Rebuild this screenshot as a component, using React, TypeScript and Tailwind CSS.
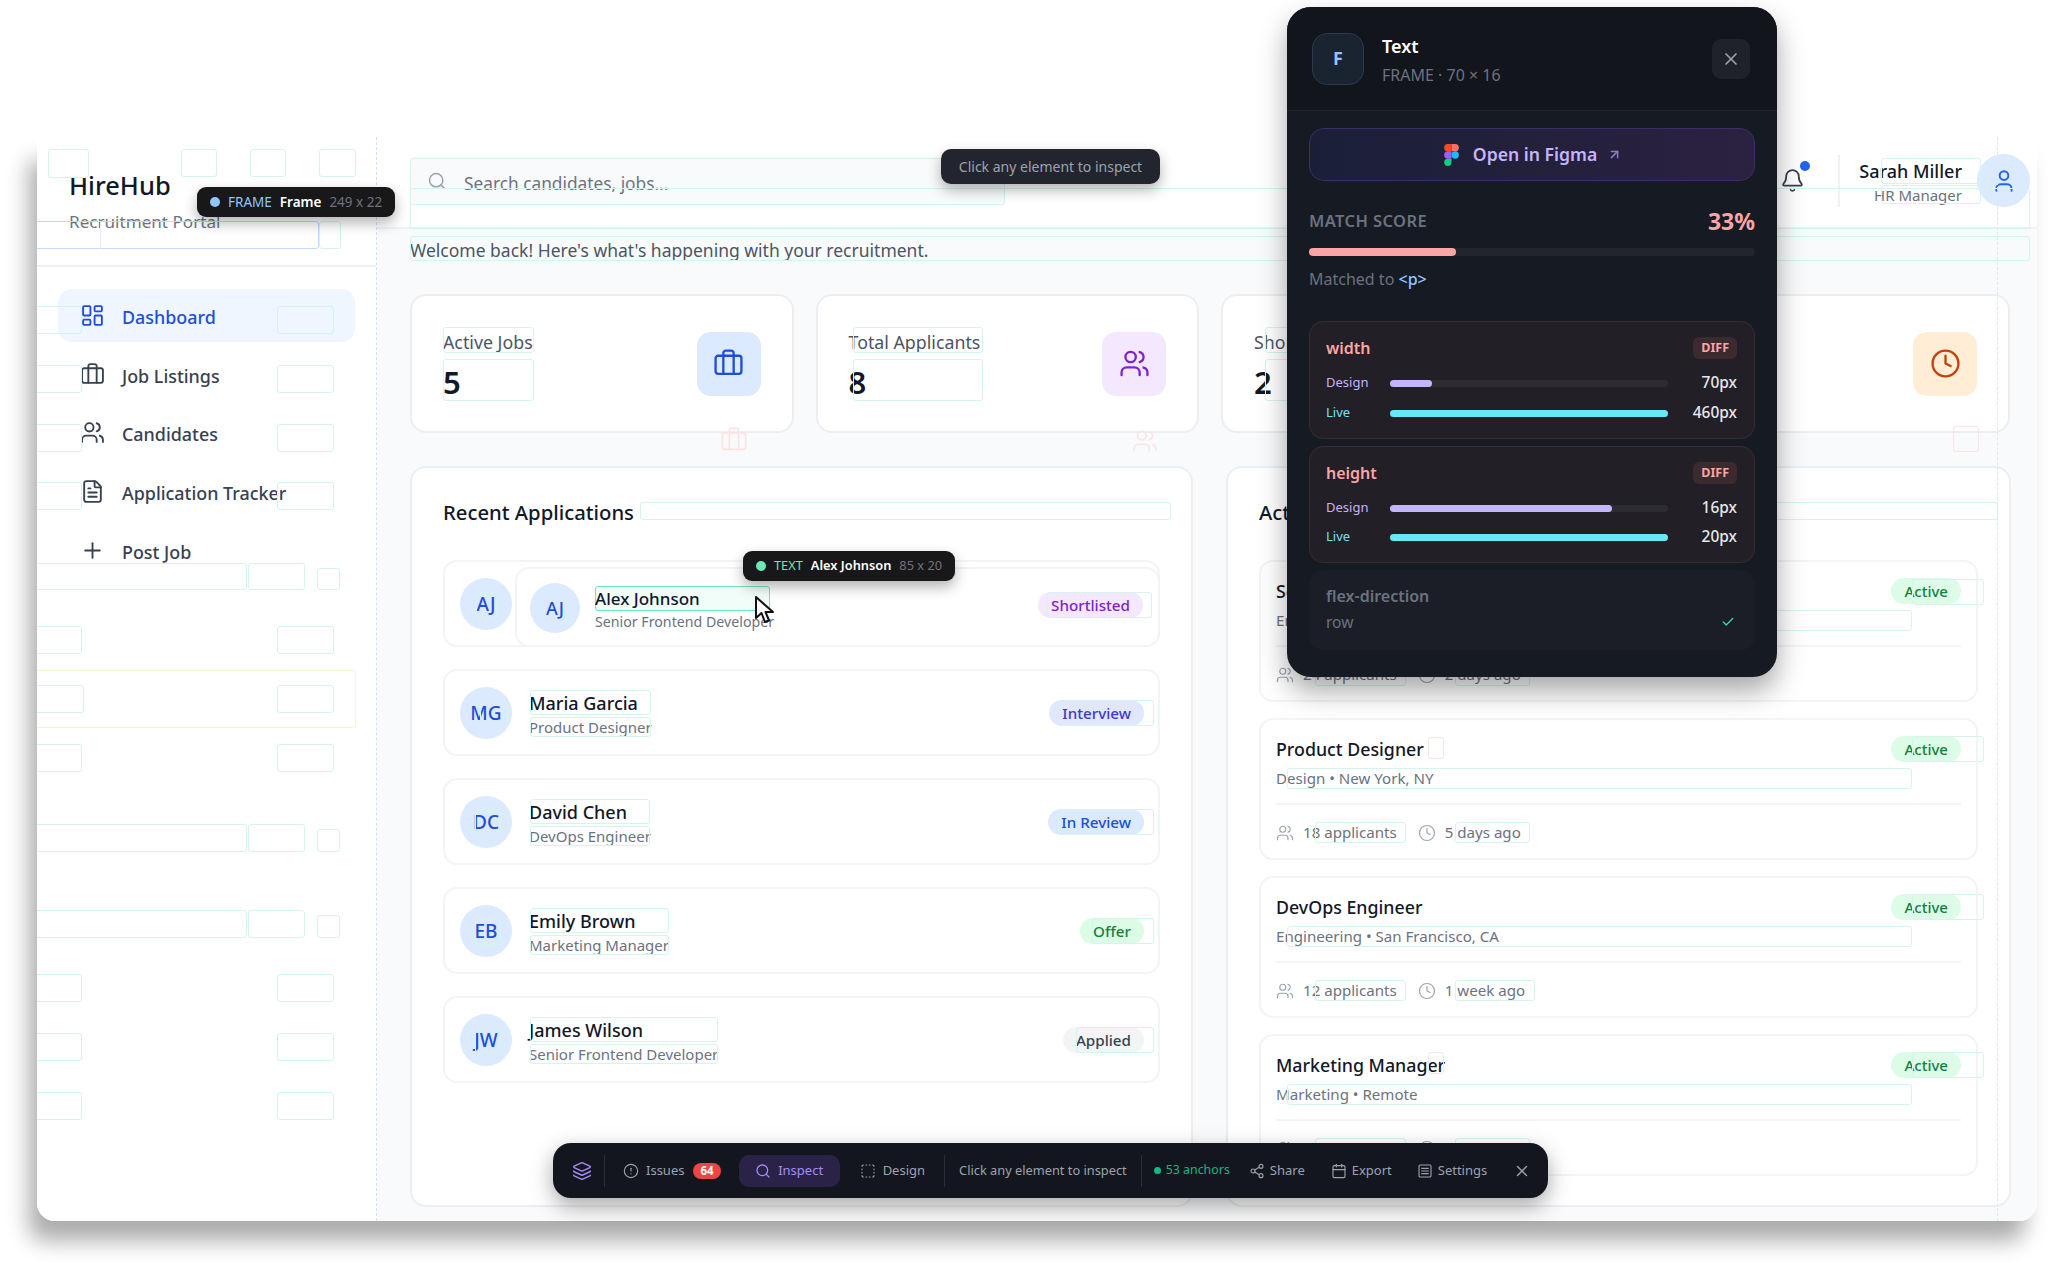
import {
  ArrowUpRight,
  Bell,
  Briefcase,
  Calendar,
  Check,
  CircleAlert,
  Clock,
  FileText,
  Layers,
  LayoutDashboard,
  Plus,
  Search,
  Share2,
  SquareDashed,
  SquareMenu,
  User,
  Users,
  X,
} from "lucide-react";

type Rect = [number, number, number, number];

const nav = [
  { label: "Dashboard", icon: LayoutDashboard, active: true },
  { label: "Job Listings", icon: Briefcase },
  { label: "Candidates", icon: Users },
  { label: "Application Tracker", icon: FileText },
  { label: "Post Job", icon: Plus },
];

const stats = [
  { label: "Active Jobs", value: "5", icon: Briefcase, box: "bg-[#dbeafe] text-[#1d4ed8]" },
  { label: "Total Applicants", value: "8", icon: Users, box: "bg-[#f3e8ff] text-[#7e22ce]" },
  { label: "Shortlisted", value: "2", icon: Users, box: "bg-[#dcfce7] text-[#15803d]" },
  { label: "Pending", value: "3", icon: Clock, box: "bg-[#ffedd5] text-[#c2410c]" },
];

const applicants = [
  { initials: "AJ", name: "Alex Johnson", role: "Senior Frontend Developer", status: "Shortlisted", badge: "bg-[#f3e8ff] text-[#7e22ce]" },
  { initials: "MG", name: "Maria Garcia", role: "Product Designer", status: "Interview", badge: "bg-[#e0e7ff] text-[#4338ca]" },
  { initials: "DC", name: "David Chen", role: "DevOps Engineer", status: "In Review", badge: "bg-[#dbeafe] text-[#1d4ed8]" },
  { initials: "EB", name: "Emily Brown", role: "Marketing Manager", status: "Offer", badge: "bg-[#dcfce7] text-[#15803d]" },
  { initials: "JW", name: "James Wilson", role: "Senior Frontend Developer", status: "Applied", badge: "bg-[#f3f4f6] text-[#374151]" },
];

const jobs = [
  { title: "Senior Frontend Developer", meta: "Engineering • Remote", applicants: "24 applicants", age: "2 days ago" },
  { title: "Product Designer", meta: "Design • New York, NY", applicants: "18 applicants", age: "5 days ago" },
  { title: "DevOps Engineer", meta: "Engineering • San Francisco, CA", applicants: "12 applicants", age: "1 week ago" },
  { title: "Marketing Manager", meta: "Marketing • Remote", applicants: "15 applicants", age: "3 days ago" },
];

// inspector outlines, page coordinates. x=27 runs under the window's clipped left edge
const tealBoxes: Rect[] = [
  [48, 149, 41, 29], [181, 149, 36, 28], [250, 149, 36, 28], [319, 149, 37, 28], [319, 221, 22, 28],
  [27, 306, 55, 28], [277, 306, 57, 28], [27, 365, 55, 28], [277, 365, 57, 28],
  [27, 424, 55, 28], [277, 424, 57, 28], [27, 482, 55, 28], [277, 482, 57, 28],
  [27, 563, 220, 27], [248, 563, 57, 27], [317, 568, 23, 22],
  [27, 626, 55, 28], [277, 626, 57, 28], [27, 685, 57, 28], [277, 685, 57, 28],
  [27, 744, 55, 28], [277, 744, 57, 28],
  [27, 824, 220, 28], [248, 824, 57, 28], [317, 829, 23, 23],
  [27, 910, 220, 28], [248, 910, 57, 28], [317, 915, 23, 23],
  [27, 974, 55, 28], [277, 974, 57, 28], [27, 1033, 55, 28], [277, 1033, 57, 28],
  [27, 1092, 55, 28], [277, 1092, 57, 28],
  [410, 158, 595, 47], [410, 188, 1620, 41], [410, 236, 1620, 25],
  [1881, 158, 100, 26], [1881, 185, 100, 19],
  [443, 327, 91, 26], [443, 359, 91, 42], [853, 327, 130, 26], [853, 359, 130, 42], [1265, 327, 40, 26], [1265, 359, 40, 42],
  [640, 502, 531, 18], [1300, 502, 698, 18],
  [476, 592, 21, 26], [530, 690, 121, 25], [530, 717, 121, 20], [480, 701, 28, 26],
  [530, 799, 120, 25], [530, 826, 120, 20], [475, 810, 26, 26],
  [530, 908, 139, 25], [530, 935, 139, 20], [475, 919, 26, 26],
  [530, 1017, 188, 25], [530, 1044, 188, 20], [475, 1028, 26, 26],
  [1049, 592, 105, 26], [1060, 700, 94, 26], [1058, 809, 96, 26], [1092, 918, 62, 26], [1076, 1027, 78, 26],
  [1912, 579, 72, 26], [1287, 610, 625, 21], [1315, 665, 91, 21], [1455, 665, 75, 21],
  [1912, 736, 72, 26], [1287, 768, 625, 21], [1315, 822, 91, 21], [1455, 822, 75, 21],
  [1912, 894, 72, 26], [1287, 926, 625, 21], [1315, 980, 91, 21], [1455, 980, 80, 21],
  [1912, 1052, 72, 26], [1287, 1084, 625, 21], [1315, 1138, 91, 21], [1455, 1138, 75, 21],
];

const redBoxes: Rect[] = [
  [1953, 426, 26, 26], [1428, 737, 16, 22], [1428, 1052, 16, 22],
];

function Outlines() {
  return (
    <div className="absolute inset-0 [clip-path:inset(137px_11px_42px_37px)]">
      {tealBoxes.map(([left, top, width, height], i) => (
        <div
          key={i}
          className="absolute rounded-[3px] border-[1.5px] border-[#d3f5ec]"
          style={{ left, top, width, height }}
        />
      ))}
      {redBoxes.map(([left, top, width, height], i) => (
        <div
          key={i}
          className="absolute rounded-[3px] border-[1.5px] border-[#fde4e4]"
          style={{ left, top, width, height }}
        />
      ))}
      <div className="absolute left-[27px] top-[221px] h-[28px] w-[292px] rounded-[3px] border-[1.5px] border-[#bfdbfe]" />
      <div className="absolute left-[100px] top-[221px] h-[28px] w-0 border-l border-[#dbeafe]" />
      <div className="absolute left-[27px] top-[670px] h-[58px] w-[329px] rounded-[3px] border-[1.5px] border-[#fdf3cf]" />
      <div className="absolute left-[1997px] top-[137px] h-[1084px] w-0 border-l border-dashed border-[#dbe7fb]" />
      <Briefcase className="absolute left-[720px] top-[426px] h-[28px] w-[28px] text-[#fde2e2]" strokeWidth={1.4} />
      <Users className="absolute left-[1132px] top-[428px] h-[26px] w-[26px] text-[#fde2e2]" strokeWidth={1.4} />
    </div>
  );
}

function Sidebar() {
  return (
    <aside className="flex w-[340px] shrink-0 flex-col border-r border-dashed border-[#cfe0f7] bg-white">
      <div className="h-[130px] border-b-2 border-[#eef0f3] pl-[32px] pt-[30px]">
        <h1 className="text-[25.5px] leading-[36px] font-medium text-[#111827]">HireHub</h1>
        <p className="mt-[8px] text-[17.1px] leading-[22px] text-[#6b7280]">Recruitment Portal</p>
      </div>
      <nav className="flex flex-col gap-[5.7px] pl-[21px] pr-[21px] pt-[22px]">
        {nav.map(({ label, icon: Icon, active }) => (
          <div
            key={label}
            className={
              active
                ? "flex h-[53px] items-center gap-[17px] rounded-[14px] bg-[#eff6ff] pl-[22px] text-[#1d4ed8]"
                : "flex h-[53px] items-center gap-[17px] rounded-[14px] pl-[22px] text-[#374151]"
            }
          >
            <Icon className="h-[25px] w-[25px]" strokeWidth={1.8} />
            <span className="pt-[4px] text-[17.9px] font-medium">{label}</span>
          </div>
        ))}
      </nav>
    </aside>
  );
}

function TopBar() {
  return (
    <header className="flex h-[92px] shrink-0 items-center border-b-2 border-[#f0f1f4] bg-white pb-[3px] pl-[33px] pr-[7px]">
      <div className="flex h-[47px] w-[595px] items-center gap-[17px] rounded-[6px] bg-[#f9fafb] pl-[17px]">
        <Search className="h-[20px] w-[20px] text-[#9ca3af]" strokeWidth={1.8} />
        <span className="pt-[6px] text-[17.3px] text-[#6b7280]">Search candidates, jobs...</span>
      </div>
      <div className="ml-auto flex items-center">
        <div className="relative mr-[33px]">
          <Bell className="h-[25px] w-[25px] text-[#374151]" strokeWidth={1.7} />
          <span className="absolute -right-[5px] -top-[7px] h-[10px] w-[10px] rounded-full bg-[#2563eb]" />
        </div>
        <div className="flex h-[52px] w-[139px] flex-col items-end justify-center border-l-2 border-[#f0f1f4] pr-[15px] pt-[4px]">
          <span className="text-[18px] leading-[25px] font-medium text-[#111827]">Sarah Miller</span>
          <span className="text-[15px] leading-[22px] text-[#6b7280]">HR Manager</span>
        </div>
        <div className="flex h-[53px] w-[53px] items-center justify-center rounded-full bg-[#dbeafe] text-[#2563eb]">
          <User className="h-[26px] w-[26px]" strokeWidth={1.8} />
        </div>
      </div>
    </header>
  );
}

function StatCard({ label, value, icon: Icon, box }: (typeof stats)[number]) {
  return (
    <div className="flex h-[139px] items-center justify-between rounded-[16px] border-2 border-[#eceef1] bg-white pl-[31px] pr-[31px]">
      <div className="pt-[3px]">
        <p className="text-[17.8px] leading-[26px] text-[#4b5563]">{label}</p>
        <p className="mt-[7px] text-[31px] leading-[40px] font-semibold text-[#111827]">{value}</p>
      </div>
      <div className={`flex h-[64px] w-[64px] items-center justify-center rounded-[14px] ${box}`}>
        <Icon className="h-[31px] w-[31px]" strokeWidth={1.8} />
      </div>
    </div>
  );
}

function ApplicationRow({ initials, name, role, status, badge }: (typeof applicants)[number]) {
  return (
    <div className="flex h-[87px] items-center rounded-[14px] border-2 border-[#f3f4f6] pl-[15px] pr-[14px] pt-[1px]">
      <div className="flex h-[52px] w-[52px] items-center justify-center rounded-full bg-[#dbeafe] text-[19px] font-medium text-[#1d4ed8]">
        {initials}
      </div>
      <div className="ml-[17px] pt-[2px]">
        <p className="text-[18px] leading-[25px] font-medium text-[#111827]">{name}</p>
        <p className="text-[15px] leading-[22px] text-[#6b7280]">{role}</p>
      </div>
      <span className={`ml-auto rounded-full px-[13px] py-0 text-[15.2px] leading-[26px] font-medium ${badge}`}>{status}</span>
    </div>
  );
}

function JobRow({ title, meta, applicants: count, age }: (typeof jobs)[number]) {
  return (
    <div className="h-[142px] rounded-[14px] border-2 border-[#f3f4f6] px-[15px] pt-[16px]">
      <div className="flex items-center justify-between">
        <p className="text-[17.8px] leading-[26px] font-medium text-[#111827]">{title}</p>
        <span className="rounded-full bg-[#dcfce7] px-[13px] text-[15px] leading-[26px] font-medium text-[#15803d]">Active</span>
      </div>
      <p className="mt-[5px] text-[15.1px] leading-[22px] text-[#6b7280]">{meta}</p>
      <div className="mt-[14px] flex items-center border-t-2 border-[#f3f4f6] pt-[17px] text-[15.1px] leading-[21px] text-[#6b7280]">
        <Users className="h-[18px] w-[18px] text-[#9ca3af]" strokeWidth={1.6} />
        <span className="ml-[9px]">{count}</span>
        <Clock className="ml-[21px] h-[18px] w-[18px] text-[#9ca3af]" strokeWidth={1.6} />
        <span className="ml-[9px]">{age}</span>
      </div>
    </div>
  );
}

function Main() {
  return (
    <main className="flex min-w-0 flex-1 flex-col">
      <TopBar />
      <div className="flex flex-1 flex-col overflow-hidden bg-[#f9fafb] pb-[14px] pl-[33px] pr-[26px] pt-[9px]">
        <p className="text-[17.5px] leading-[25px] text-[#4b5563]">Welcome back! Here's what's happening with your recruitment.</p>
        <div className="mr-[1px] mt-[31px] grid grid-cols-4 gap-[22px]">
          {stats.map((s) => (
            <StatCard key={s.label} {...s} />
          ))}
        </div>
        <div className="mt-[33px] grid flex-1 grid-cols-[783px_1fr] gap-[33px]">
          <section className="rounded-[16px] border-2 border-[#eceef1] bg-white px-[31px] pt-[29px]">
            <h2 className="text-[20.3px] leading-[30px] font-medium text-[#111827]">Recent Applications</h2>
            <div className="mt-[33px] flex flex-col gap-[22px]">
              {applicants.map((a) => (
                <ApplicationRow key={a.initials} {...a} />
              ))}
            </div>
          </section>
          <section className="overflow-hidden rounded-[16px] border-2 border-[#eceef1] bg-white px-[31px] pt-[29px]">
            <h2 className="text-[20.3px] leading-[30px] font-medium text-[#111827]">Active Job Postings</h2>
            <div className="mt-[33px] flex flex-col gap-[16px]">
              {jobs.map((j) => (
                <JobRow key={j.title} {...j} />
              ))}
            </div>
          </section>
        </div>
      </div>
    </main>
  );
}

function HoverGhost() {
  return (
    <div className="absolute left-[515px] top-[567px] flex h-[80px] w-[645px] items-start rounded-[14px] border-2 border-[#f3f4f6] bg-white pl-[13px] pt-[14px]">
      <div className="flex h-[50px] w-[50px] items-center justify-center rounded-full bg-[#dbeafe] text-[18px] font-medium text-[#1d4ed8]">AJ</div>
      <div className="relative ml-[15px] mt-[3px] w-[175px] pt-[1px]">
        <div className="absolute top-0 h-[25px] w-[175px] rounded-[3px] border-[1.5px] border-[#6ee7b7] bg-[#f0fdf9]" />
        <p className="relative text-[17px] leading-[24px] font-medium text-[#111827]">Alex Johnson</p>
        <p className="relative whitespace-nowrap text-[14.2px] leading-[21px] text-[#6b7280]">Senior Frontend Developer</p>
      </div>
      <span className="absolute right-[15px] top-[23px] rounded-full bg-[#f3e8ff] px-[13px] text-[15.2px] leading-[26px] font-medium text-[#7e22ce]">Shortlisted</span>
      <div className="absolute right-[6px] top-[23px] h-[26px] w-[105px] rounded-[3px] border-[1.5px] border-[#d3f5ec]" />
    </div>
  );
}

function Cursor() {
  return (
    <svg className="absolute left-[754px] top-[595px]" width="24" height="30" viewBox="0 0 24 30">
      <path d="M2 2 L2 23 L7.5 18 L11 27 L15 25.5 L11.5 17 L19 17 Z" fill="white" stroke="#111" strokeWidth="2" strokeLinejoin="round" />
    </svg>
  );
}

function Chip({ box, dot, type, name, size, typeColor }: { box: string; dot: string; type: string; name: string; size: string; typeColor: string }) {
  return (
    <div className={`absolute flex h-[30px] items-center gap-[8px] whitespace-nowrap rounded-[9px] bg-[#18181b] px-[13px] shadow-[0_6px_14px_rgba(0,0,0,0.3)] ${box}`}>
      <span className={`h-[10px] w-[10px] rounded-full ${dot}`} />
      <span className={typeColor}>{type}</span>
      <span className="font-semibold text-white">{name}</span>
      <span className="text-[#71717a]">{size}</span>
    </div>
  );
}

function FigmaLogo() {
  return (
    <svg width="15" height="22" viewBox="0 0 38 57">
      <path d="M19 28.5a9.5 9.5 0 1 1 19 0 9.5 9.5 0 0 1-19 0z" fill="#1abcfe" />
      <path d="M0 47.5A9.5 9.5 0 0 1 9.5 38H19v9.5a9.5 9.5 0 1 1-19 0z" fill="#0acf83" />
      <path d="M19 0v19h9.5a9.5 9.5 0 1 0 0-19H19z" fill="#ff7262" />
      <path d="M0 9.5A9.5 9.5 0 0 0 9.5 19H19V0H9.5A9.5 9.5 0 0 0 0 9.5z" fill="#f24e1e" />
      <path d="M0 28.5A9.5 9.5 0 0 0 9.5 38H19V19H9.5A9.5 9.5 0 0 0 0 28.5z" fill="#a259ff" />
    </svg>
  );
}

function DiffBar({ label, value, fill, tone }: { label: string; value: string; fill: number; tone: "design" | "live" }) {
  return (
    <div className="flex h-[20px] items-center">
      <span className={`w-[64px] text-[13px] ${tone === "design" ? "text-[#c4b5fd]" : "text-[#67e8f9]"}`}>{label}</span>
      <div className="h-[7px] w-[278px] rounded-full bg-[#2e2c33]">
        <div className={`h-full rounded-full ${tone === "design" ? "bg-[#c4b5fd]" : "bg-[#67e8f9]"}`} style={{ width: `${fill}%` }} />
      </div>
      <span className="ml-auto text-[15.5px] font-medium text-[#e5e7eb]">{value}</span>
    </div>
  );
}

function DiffCard({ prop, design, live, fill, height, gap }: { prop: string; design: string; live: string; fill: number; height: string; gap: string }) {
  return (
    <div className={`rounded-[14px] border border-[#3a2b30] bg-[#231f26] pl-[16px] pr-[17px] pt-[15px] ${height}`}>
      <div className="flex items-center justify-between">
        <span className="text-[16px] leading-[22px] font-semibold text-[#fca5a5]">{prop}</span>
        <span className="rounded-[6px] bg-[#3b2a2e] px-[8px] text-[12.5px] leading-[22px] font-bold text-[#fca5a5]">DIFF</span>
      </div>
      <div className={`mt-[14px] flex flex-col ${gap}`}>
        <DiffBar label="Design" value={design} fill={fill} tone="design" />
        <DiffBar label="Live" value={live} fill={100} tone="live" />
      </div>
    </div>
  );
}

function InspectorPanel() {
  return (
    <div className="absolute left-[1287px] top-[7px] h-[670px] w-[490px] overflow-hidden rounded-[24px] bg-[#161a22] shadow-[0_14px_28px_rgba(0,0,0,0.35)]">
      <div className="flex h-[104px] items-center border-b border-[#20242c] bg-[#12151c] pl-[25px] pr-[27px]">
        <div className="flex h-[52px] w-[52px] items-center justify-center rounded-[15px] border border-[#2d3a4c] bg-[#1a2330] text-[18px] font-bold text-[#93c5fd]">F</div>
        <div className="ml-[18px] pt-[2px]">
          <p className="text-[18px] leading-[26px] font-semibold text-white">Text</p>
          <p className="mt-[5px] text-[16px] leading-[22px] text-[#6b7280]">FRAME · 70 × 16</p>
        </div>
        <button type="button" className="ml-auto flex h-[40px] w-[38px] items-center justify-center rounded-[9px] bg-[#1f2229] text-[#9ca3af]">
          <X className="h-[20px] w-[20px]" strokeWidth={2} />
        </button>
      </div>
      <div className="px-[22px] pt-[17px]">
        <div className="flex h-[53px] items-center justify-center rounded-[15px] border-[1.5px] border-[#3b2f69] bg-gradient-to-r from-[#1a1f38] to-[#2b2140] pl-[2px]">
          <FigmaLogo />
          <span className="ml-[14px] text-[17.6px] font-semibold text-[#c4b5fd]">Open in Figma</span>
          <ArrowUpRight className="ml-[10px] h-[15px] w-[15px] text-[#8b7fb8]" strokeWidth={2.4} />
        </div>
        <div className="mt-[25px] flex h-[30px] items-center justify-between">
          <span className="text-[16.5px] font-semibold tracking-[0.4px] text-[#6b7280]">MATCH SCORE</span>
          <span className="text-[23px] font-bold text-[#fca5a5]">33%</span>
        </div>
        <div className="mt-[12px] h-[8px] rounded-full bg-[#22252d]">
          <div className="h-full w-[33%] rounded-full bg-[#fca5a5]" />
        </div>
        <p className="mt-[13px] text-[16px] leading-[20px] text-[#6b7280]">
          Matched to <span className="font-medium text-[#93c5fd]">&lt;p&gt;</span>
        </p>
        <div className="mt-[32px] flex flex-col gap-[7px]">
          <DiffCard prop="width" design="70px" live="460px" fill={15} height="h-[118px]" gap="gap-[10px]" />
          <DiffCard prop="height" design="16px" live="20px" fill={80} height="h-[117px]" gap="gap-[9px]" />
          <div className="flex h-[80px] flex-col justify-center rounded-[14px] bg-[#1b1e26] pb-[2px] pl-[17px] pr-[20px]">
            <span className="text-[16px] leading-[24px] font-semibold text-[#6b7280]">flex-direction</span>
            <div className="mt-[2px] flex items-center justify-between">
              <span className="text-[15.5px] leading-[24px] text-[#6b7280]">row</span>
              <Check className="h-[14px] w-[14px] text-[#34d399]" strokeWidth={2.5} />
            </div>
          </div>
        </div>
      </div>
    </div>
  );
}

function ToolItem({ icon: Icon, label, className }: { icon: typeof Share2; label: string; className: string }) {
  return (
    <span className={`flex items-center text-[#9ca3af] ${className}`}>
      <Icon className="h-[16px] w-[16px]" strokeWidth={1.7} />
      {label}
    </span>
  );
}

function Toolbar() {
  return (
    <div className="absolute left-[553px] top-[1143px] flex h-[55px] w-[995px] items-center whitespace-nowrap rounded-[18px] bg-[#14161f] pl-[19px] text-[13px] shadow-[0_8px_22px_rgba(0,0,0,0.35)]">
      <Layers className="h-[20px] w-[20px] text-[#a78bfa]" strokeWidth={1.7} />
      <span className="ml-[12px] h-[32px] w-px bg-[#2a2d36]" />
      <ToolItem icon={CircleAlert} label="Issues" className="ml-[18px] gap-[7px]" />
      <span className="ml-[9px] rounded-full bg-[#ef4444] px-[7px] text-[11.5px] leading-[16px] font-bold text-white">64</span>
      <span className="ml-[18px] flex h-[32px] w-[101px] items-center justify-center gap-[7px] rounded-[10px] bg-[#2a2347] text-[#a78bfa]">
        <Search className="h-[16px] w-[16px]" strokeWidth={1.9} />
        Inspect
      </span>
      <ToolItem icon={SquareDashed} label="Design" className="ml-[20px] gap-[7px]" />
      <span className="ml-[19px] h-[32px] w-px bg-[#2a2d36]" />
      <span className="ml-[14px] text-[12.8px] text-[#9ca3af]">Click any element to inspect</span>
      <span className="ml-[14px] h-[32px] w-px bg-[#2a2d36]" />
      <span className="ml-[12px] h-[7px] w-[7px] rounded-full bg-[#10b981]" />
      <span className="ml-[5px] text-[12.4px] text-[#10b981]">53 anchors</span>
      <ToolItem icon={Share2} label="Share" className="ml-[19px] gap-[5px]" />
      <ToolItem icon={Calendar} label="Export" className="ml-[26px] gap-[5px]" />
      <ToolItem icon={SquareMenu} label="Settings" className="ml-[25px] gap-[5px]" />
      <X className="ml-[26px] h-[18px] w-[18px] text-[#9ca3af]" strokeWidth={1.8} />
    </div>
  );
}

export default function App() {
  return (
    <div className="relative h-[1263px] overflow-hidden bg-white pb-[42px] pl-[37px] pr-[11px] pt-[137px] font-['Noto_Sans',sans-serif]">
      <div className="flex h-full overflow-hidden rounded-b-[18px] bg-white shadow-[-10px_22px_22px_-2px_rgba(0,0,0,0.33)]">
        <Sidebar />
        <Main />
      </div>
      <Outlines />
      <HoverGhost />
      <Cursor />
      <Chip box="left-[197px] top-[187px] text-[13.5px]" dot="bg-[#93c5fd]" type="FRAME" name="Frame" size="249 x 22" typeColor="text-[#93c5fd]" />
      <Chip box="left-[743px] top-[551px] text-[12.8px]" dot="bg-[#6ee7b7]" type="TEXT" name="Alex Johnson" size="85 x 20" typeColor="text-[#6ee7b7]" />
      <div className="absolute left-[941px] top-[149px] flex h-[35px] w-[219px] items-center justify-center rounded-[10px] bg-[#22252d] text-[14px] text-[#9ca3af] shadow-[0_6px_14px_rgba(0,0,0,0.3)]">
        Click any element to inspect
      </div>
      <InspectorPanel />
      <Toolbar />
    </div>
  );
}
